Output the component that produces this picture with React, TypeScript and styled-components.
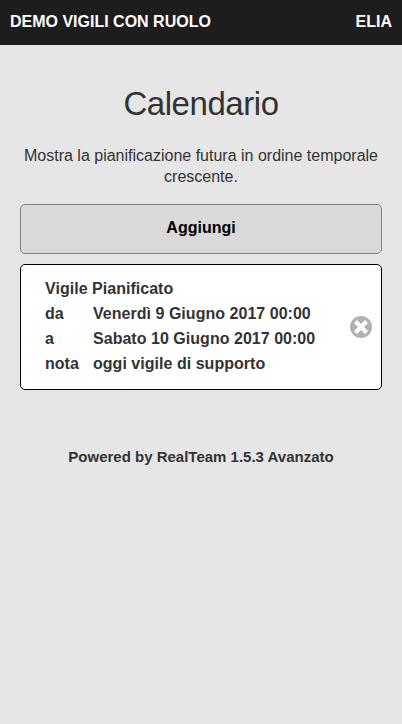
import React from "react";
import styled, { createGlobalStyle } from "styled-components";

const GlobalStyle = createGlobalStyle`
  * { box-sizing: border-box; }
  body { margin: 0; background: #e6e6e6; color: #333; font-family: "Liberation Sans", Arial, sans-serif; font-size: 16px; }
`;
const Page = styled.div`min-height: 724px; background: #e6e6e6;`;
const Header = styled.header`
  display: flex; justify-content: space-between; height: 45px; padding: 0 10px;
  background: #1d1d1d; color: #fff; font-weight: bold; line-height: 43px; white-space: nowrap;
`;
const HeaderLabel = styled.span``;
const Content = styled.main`padding: 39px 20px 0;`;
const Title = styled.h1`
  margin: 0; font-size: 33px; font-weight: normal; line-height: 40px; letter-spacing: -0.45px; text-align: center;
`;
const Intro = styled.p`margin: 21px 0 0; line-height: 21px; text-align: center;`;
const AddButton = styled.button`
  display: block; width: 100%; height: 50px; margin: 17px 0 10px; padding: 0 0 2px;
  border: 1px solid #808080; border-radius: 5px; background: #d9d9d9; color: #000;
  font: bold 16px "Liberation Sans", Arial, sans-serif;
`;
const Card = styled.section`
  display: flex; align-items: center; justify-content: space-between; height: 126px;
  padding: 0 9px 0 24px; border: 1px solid #000; border-radius: 5px; background: #fff;
`;
const Details = styled.div`
  padding-bottom: 2px; font-weight: bold; line-height: 25px; letter-spacing: 0.03px; white-space: nowrap;
`;
const Row = styled.div`display: grid; grid-template-columns: 48px auto;`;
const RemoveButton = styled.button`display: flex; padding: 0; border: 0; background: none;`;
const Footer = styled.footer`margin-top: 56px; font-size: 15px; font-weight: bold; line-height: 22px; text-align: center;`;

const rows = [
  ["da", "Venerdì 9 Giugno 2017 00:00"],
  ["a", "Sabato 10 Giugno 2017 00:00"],
  ["nota", "oggi vigile di supporto"],
];

export default function App() {
  return (
    <Page>
      <GlobalStyle />
      <Header><HeaderLabel>DEMO VIGILI CON RUOLO</HeaderLabel><HeaderLabel>ELIA</HeaderLabel></Header>
      <Content>
        <Title>Calendario</Title>
        <Intro>Mostra la pianificazione futura in ordine temporale crescente.</Intro>
        <AddButton>Aggiungi</AddButton>
        <Card>
          <Details>
            <div>Vigile Pianificato</div>
            {rows.map(([k, v]) => <Row key={k}><span>{k}</span><span>{v}</span></Row>)}
          </Details>
          <RemoveButton aria-label="Rimuovi">
            <svg width="22" height="22" viewBox="0 0 22 22">
              <circle cx="11" cy="11" r="11" fill="#b2b2b2" />
              <polygon transform="translate(4 4)" points="14,3 11,0 7,4 3,0 0,3 4,7 0,11 3,14 7,10 11,14 14,11 10,7" fill="#fff" />
            </svg>
          </RemoveButton>
        </Card>
        <Footer>Powered by RealTeam 1.5.3 Avanzato</Footer>
      </Content>
    </Page>
  );
}
